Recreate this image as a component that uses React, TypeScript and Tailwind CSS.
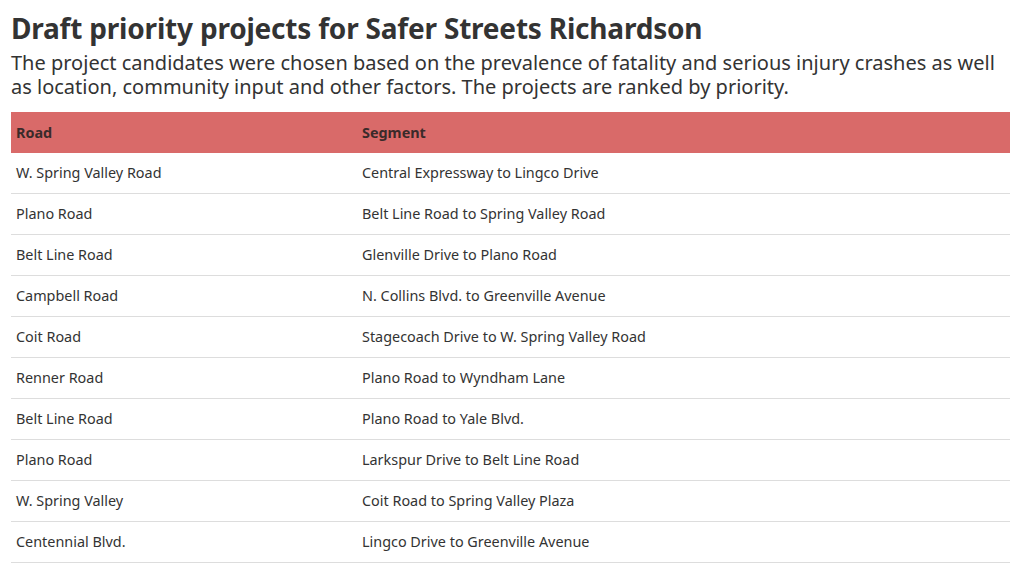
import React from "react";

const rows: [string, string][] = [
  ["W. Spring Valley Road", "Central Expressway to Lingco Drive"],
  ["Plano Road", "Belt Line Road to Spring Valley Road"],
  ["Belt Line Road", "Glenville Drive to Plano Road"],
  ["Campbell Road", "N. Collins Blvd. to Greenville Avenue"],
  ["Coit Road", "Stagecoach Drive to W. Spring Valley Road"],
  ["Renner Road", "Plano Road to Wyndham Lane"],
  ["Belt Line Road", "Plano Road to Yale Blvd."],
  ["Plano Road", "Larkspur Drive to Belt Line Road"],
  ["W. Spring Valley", "Coit Road to Spring Valley Plaza"],
  ["Centennial Blvd.", "Lingco Drive to Greenville Avenue"],
];

export default function App() {
  return (
    <div
      className="w-[1020px] h-[574px] bg-white text-[#333333] px-[11px] pt-[10px] overflow-hidden"
      style={{ fontFamily: '"Noto Sans", "Open Sans", sans-serif' }}
    >
      <h1 className="text-[28px] leading-[36px] font-bold text-[#333333] tracking-[-0.2px]">
        Draft priority projects for Safer Streets Richardson
      </h1>
      <p className="text-[20px] leading-[24px] text-[#333333] mt-[5px]">
        The project candidates were chosen based on the prevalence of fatality and serious injury crashes as well as location, community input and other factors. The projects are ranked by priority.
      </p>
      <div className="mt-[13px] w-[999px]">
        <div className="flex h-[41px] items-center bg-[#d96a69] text-[14.4px] font-bold text-[#3a2a2a]">
          <div className="w-[346px] pl-[5px]">Road</div>
          <div className="pl-[5px]">Segment</div>
        </div>
        {rows.map(([r, s], i) => (
          <div
            key={i}
            className="flex h-[41px] items-center border-b border-[#dddddd] text-[14.4px] text-[#333333]"
          >
            <div className="w-[346px] pl-[5px]">{r}</div>
            <div className="pl-[5px]">{s}</div>
          </div>
        ))}
      </div>
    </div>
  );
}
